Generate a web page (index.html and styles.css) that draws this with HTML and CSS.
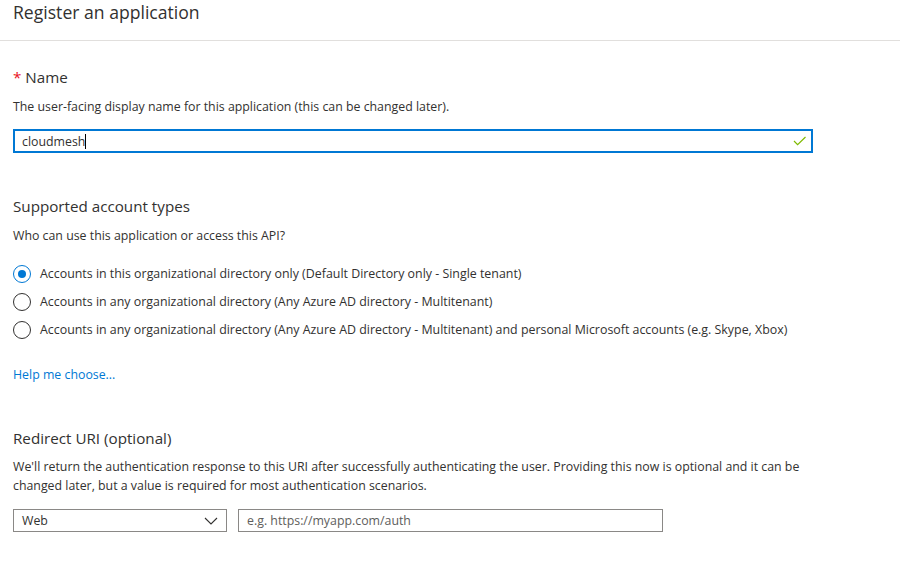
FILE: index.html
```html
<!DOCTYPE html>
<html>
<head>
<meta charset="utf-8">
<link rel="stylesheet" href="styles.css">
</head>
<body>
<header class="head">
  <h1 class="title">Register an application</h1>
</header>
<main class="content">
  <section class="sec sec-name">
    <h2 class="label"><span class="req">*</span> Name</h2>
    <p class="desc">The user-facing display name for this application (this can be changed later).</p>
    <div class="field focused">
      <span class="value">cloudmesh</span><span class="caret"></span>
      <svg class="check" width="14" height="10" viewBox="0 0 14 10"><path d="M1 5 L4.6 8.6 L12.5 1" fill="none" stroke="#7fba00" stroke-width="1.2"/></svg>
    </div>
  </section>

  <section class="sec sec-types">
    <h2 class="label">Supported account types</h2>
    <p class="desc">Who can use this application or access this API?</p>
    <div class="radios">
      <label class="radio"><span class="circle on"></span><span>Accounts in this organizational directory only (Default Directory only - Single tenant)</span></label>
      <label class="radio"><span class="circle"></span><span>Accounts in any organizational directory (Any Azure AD directory - Multitenant)</span></label>
      <label class="radio"><span class="circle"></span><span>Accounts in any organizational directory (Any Azure AD directory - Multitenant) and personal Microsoft accounts (e.g. Skype, Xbox)</span></label>
    </div>
    <a class="link" href="#">Help me choose...</a>
  </section>

  <section class="sec sec-redirect">
    <h2 class="label">Redirect URI (optional)</h2>
    <p class="desc wide">We'll return the authentication response to this URI after successfully authenticating the user. Providing this now is optional and it can be changed later, but a value is required for most authentication scenarios.</p>
    <div class="row">
      <div class="select"><span>Web</span>
        <svg width="14" height="8" viewBox="0 0 14 8"><path d="M1 1 L7 7 L13 1" fill="none" stroke="#323130" stroke-width="1.1"/></svg>
      </div>
      <div class="uri"><span class="ph">e.g. https://myapp.com/auth</span></div>
    </div>
  </section>
</main>
</body>
</html>
```
FILE: styles.css
```css
* { box-sizing: border-box; }
html, body { margin: 0; padding: 0; background: #fff; }
body {
  font-family: "Open Sans", "Noto Sans", sans-serif;
  color: #323130;
  width: 900px;
  height: 566px;
  overflow: hidden;
}
.head {
  height: 41px;
  border-bottom: 1px solid #e1dfdd;
  padding: 0 13px;
}
.title {
  margin: 0;
  font-size: 17.6px;
  font-weight: 400;
  line-height: 24px;
  padding-top: 0;
}
.content { padding: 0 13px; }
.sec { margin: 0; }
.sec-name { padding-top: 26px; }
.label {
  margin: 0;
  font-size: 15.2px;
  font-weight: 400;
  line-height: 20px;
}
.req { color: #e81123; }
.desc {
  margin: 12px 0 0;
  font-size: 12.35px;
  line-height: 16px;
}
.field {
  margin-top: 14px;
  width: 800px;
  height: 24px;
  border: 2px solid #0078d4;
  display: flex;
  align-items: center;
  padding: 0 4px 0 7px;
  font-size: 12.35px;
}
.caret { display: inline-block; width: 1px; height: 15px; background: #000; margin-left: 0; }
.check { margin-left: auto; }
.sec-types { padding-top: 43px; }
.radios { margin-top: 20px; display: flex; flex-direction: column; gap: 8px; }
.radio { display: flex; align-items: center; gap: 9px; font-size: 12.4px; line-height: 20px; }
.circle {
  width: 18px; height: 18px; border-radius: 50%;
  border: 1px solid #323130;
  flex: none;
  display: flex; align-items: center; justify-content: center;
}
.circle.on { border-color: #0078d4; }
.circle.on::after { content: ""; width: 8px; height: 8px; border-radius: 50%; background: #0078d4; }
.link {
  display: block;
  margin-top: 27px;
  color: #0078d4;
  text-decoration: none;
  font-size: 12.35px;
  line-height: 16px;
}
.sec-redirect { padding-top: 45px; }
.desc.wide { width: 800px; line-height: 19px; margin-top: 9px; }
.row { display: flex; gap: 11px; margin-top: 14px; }
.select {
  width: 214px; height: 23px;
  border: 1px solid #8a8886;
  display: flex; align-items: center; justify-content: space-between;
  padding: 0 8px;
  font-size: 12.35px;
}
.uri {
  width: 425px; height: 23px;
  border: 1px solid #8a8886;
  display: flex; align-items: center;
  padding: 0 8px;
  font-size: 12.35px;
}
.ph { color: #605e5c; }
```
